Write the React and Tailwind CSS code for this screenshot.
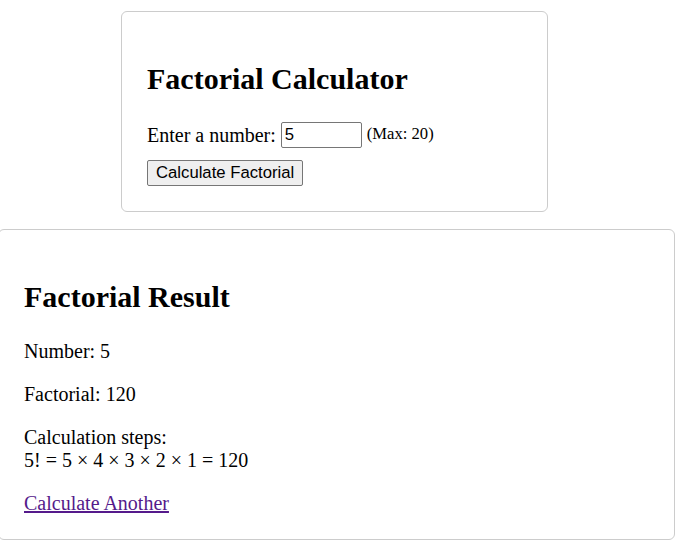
export default function App() {
  return (
    <div className="min-h-screen bg-white text-black font-['Liberation_Serif','Times_New_Roman',serif] text-[20px] overflow-hidden">
      <div className="pt-[11px]">
        {/* calculator card */}
        <div className="ml-[121px] w-[427px] border border-[#cccccc] rounded-[6px] p-[25px]">
          <h2 className="text-[30px] font-bold leading-[34.5px] my-[25px]">Factorial Calculator</h2>
          <div className="flex items-center h-[26px]">
            <span>Enter a number:</span>
            <input
              type="number"
              defaultValue="5"
              className="ml-[5px] w-[81px] h-[26px] border border-[#767676] rounded-[2px] px-[3px] font-['Liberation_Sans',Arial,sans-serif] text-[16.7px] outline-none [appearance:textfield]"
            />
            <span className="ml-[5px] text-[16.6px]">(Max: 20)</span>
          </div>
          <button className="mt-[12.5px] h-[26px] px-[8px] bg-[#efefef] border border-[#767676] rounded-[2px] font-['Liberation_Sans',Arial,sans-serif] text-[16.7px] leading-none">
            Calculate Factorial
          </button>
        </div>

        {/* result card */}
        <div className="mt-[17px] -ml-[2px] w-[677px] border border-[#cccccc] rounded-[6px] px-[25px] pt-[25px] pb-[24px] leading-[23px]">
          <h2 className="text-[30px] font-bold leading-[34.5px] my-[25px]">Factorial Result</h2>
          <p>Number: 5</p>
          <p className="mt-[20px]">Factorial: 120</p>
          <p className="mt-[20px]">
            Calculation steps:
            <br />
            5! = 5 × 4 × 3 × 2 × 1 = 120
          </p>
          <p className="mt-[20px]">
            <a href="#" className="text-[#551a8b] underline">Calculate Another</a>
          </p>
        </div>
      </div>
    </div>
  );
}
